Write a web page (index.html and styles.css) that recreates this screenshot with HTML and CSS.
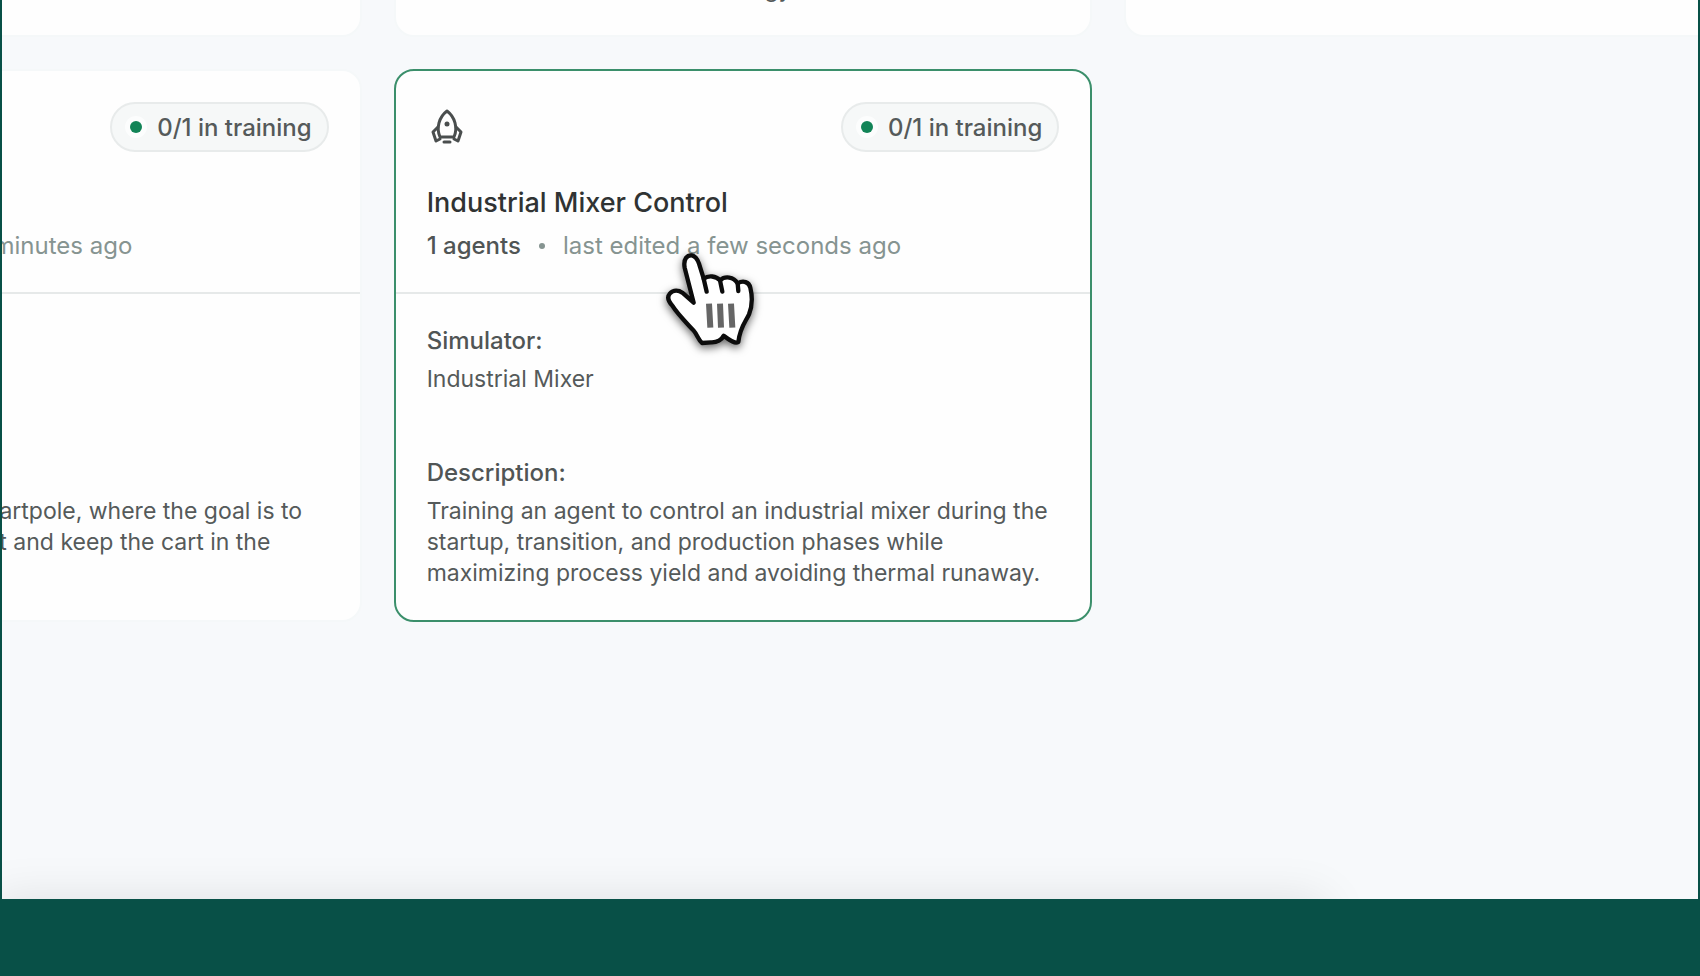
FILE: index.html
```html
<!DOCTYPE html>
<html lang="en">
<head>
  <meta charset="UTF-8" />
  <meta name="viewport" content="width=device-width, initial-scale=1.0"/>
  <title>Projects</title>
  <link rel="stylesheet" href="styles.css">
</head>
<body>

<main class="viewport">
  <section class="projects">

    <article class="card">
    </article>

    <article class="card">
      <div class="card-body">
        <p>Training an agent to control the room temperature in offices so that all of the people in it always have comfortable with the least energy.</p>
      </div>
    </article>

    <article class="card">
    </article>

    <article class="card">
      <div class="card-head">
        <div class="card-top">
          <span class="badge"><span class="dot"></span>0/1 in training</span>
        </div>
        <h2><a href="#cartpole">Cartpole</a></h2>
        <p class="meta"><strong>1 agents</strong><span class="sep"></span>last edited 48 minutes ago</p>
      </div>
      <div class="card-body">
        <h3>Simulator:</h3>
        <p>Cartpole</p>
        <h3>Description:</h3>
        <p>Starter agent project for a Cartpole, where the goal is to balance the thin pole upright and keep the cart in the center.</p>
      </div>
    </article>

    <article class="card active">
      <div class="card-head">
        <div class="card-top">
          <svg class="rocket" viewBox="0 0 40 40" aria-hidden="true">
            <path d="M13 30 C9 21 12 10 20 4 C28 10 31 21 27 30 Z"/>
            <path d="M11 20 L6 25 L9 34 L13 32 M29 20 L34 25 L31 34 L27 32"/>
            <path d="M17 35 H23"/>
            <circle cx="20" cy="17" r="2.5"/>
          </svg>
          <span class="badge"><span class="dot"></span>0/1 in training</span>
        </div>
        <h2><a href="#mixer">Industrial Mixer Control</a></h2>
        <p class="meta"><strong>1 agents</strong><span class="sep"></span>last edited a few seconds ago</p>
      </div>
      <div class="card-body">
        <h3>Simulator:</h3>
        <p>Industrial Mixer</p>
        <h3>Description:</h3>
        <p>Training an agent to control an industrial mixer during the startup, transition, and production phases while maximizing process yield and avoiding thermal runaway.</p>
      </div>
      <svg class="pointer" viewBox="0 0 420 390" aria-hidden="true">
        <path class="hand" d="M158 215 L131 110 C126 82 140 72 152 73 C164 75 170 86 174 98 L188 143 C203 132 225 135 237 148 C252 134 278 137 290 157 C307 147 324 153 328 170 C334 195 334 225 324 250 C314 272 297 288 292 333 C282 340 267 328 248 314 C243 326 228 335 210 334 L183 336 C172 326 168 310 158 299 C140 279 110 250 94 224 C84 213 77 198 87 187 C97 176 113 177 124 185 Z"/>
        <path class="knuckles" d="M188 143 L197 182 M237 148 L244 182 M290 157 L292 180"/>
        <path class="lines" d="M204 218 L208 290 M237 218 L240 290 M270 218 L274 290"/>
      </svg>
    </article>

  </section>
</main>

<footer></footer>

</body>
</html>
```
FILE: styles.css
```css
* {
  box-sizing: border-box;
}
body {
  margin: 0;
  height: 100vh;
  display: flex;
  flex-direction: column;
  font-family: Inter, sans-serif;
  font-size: 23px;
  line-height: 31px;
  color: #555a5a;
  background-color: #085047;
}
h2, h3, p {
  margin: 0;
}
.viewport {
  flex: 1;
  position: relative;
  overflow: hidden;
  margin: 0 2px;
  background-color: #f7f9fb;
}
/* soft shadow rising from the bottom edge */
.viewport::after {
  content: "";
  position: absolute;
  top: 100%;
  left: -8px;
  right: 22%;
  height: 80px;
  box-shadow: 0 0 48px rgba(0,0,0,0.1);
}
.projects {
  display: grid;
  grid-template-columns: repeat(3, 1fr);
  gap: 32px;
  margin: -516px -125px 0 -339px;
}
.card {
  display: flex;
  flex-direction: column;
  position: relative;
  min-height: 553px;
  background-color: #fefefe;
  border: 2px solid #f5f8f9;
  border-radius: 20px;
}
.card.active {
  border-color: #3b8f6b;
}
.card-head {
  padding: 31px;
  border-bottom: 2px solid #e6e9e9;
}
.card-top {
  display: flex;
  align-items: center;
  margin-bottom: 35px;
}
.rocket {
  width: 40px;
  height: 40px;
  fill: none;
  stroke: #4a4e4e;
  stroke-width: 3;
  stroke-linecap: round;
  stroke-linejoin: round;
}
.rocket circle {
  fill: #4a4e4e;
  stroke: none;
}
.badge {
  display: flex;
  align-items: center;
  gap: 15px;
  height: 50px;
  margin-left: auto;
  padding: 0 15px 0 18px;
  font-size: 24px;
  font-weight: 500;
  background-color: #f6f8f8;
  border: 2px solid #e8ebeb;
  border-radius: 25px;
}
.dot {
  width: 12px;
  height: 12px;
  border-radius: 50%;
  background-color: #128457;
  box-shadow: 0 0 0 5px #fcfdfd;
}
h2 {
  margin-bottom: 11px;
  font-size: 27px;
  line-height: 32px;
  font-weight: 500;
}
h2 a {
  color: #303333;
  text-decoration: none;
}
.meta {
  display: flex;
  align-items: center;
  font-size: 24px;
  color: #869491;
}
.meta strong {
  font-weight: 500;
  color: #505555;
}
.sep {
  width: 6px;
  height: 6px;
  margin: 0 18px;
  border-radius: 50%;
  background-color: #869491;
}
.card-body {
  margin-top: auto;
  padding: 31px 31px 30px;
}
h3 {
  margin-bottom: 8px;
  font-size: 24px;
  line-height: 31px;
  font-weight: 500;
  color: #505555;
}
.card-body p + h3 {
  margin-top: 62px;
}
.card-head + .card-body {
  margin-top: 0;
}
.pointer {
  position: absolute;
  left: 245px;
  top: 160px;
  width: 140px;
  height: 130px;
  fill: none;
  stroke: #0c0c0c;
  stroke-width: 13;
  stroke-linejoin: round;
  stroke-linecap: round;
  filter: drop-shadow(0 3px 4px rgba(0,0,0,0.6));
}
.hand {
  fill: #fff;
}
.lines {
  stroke: #666;
  stroke-width: 18;
  stroke-linecap: butt;
}
footer {
  height: 77px;
}
```
